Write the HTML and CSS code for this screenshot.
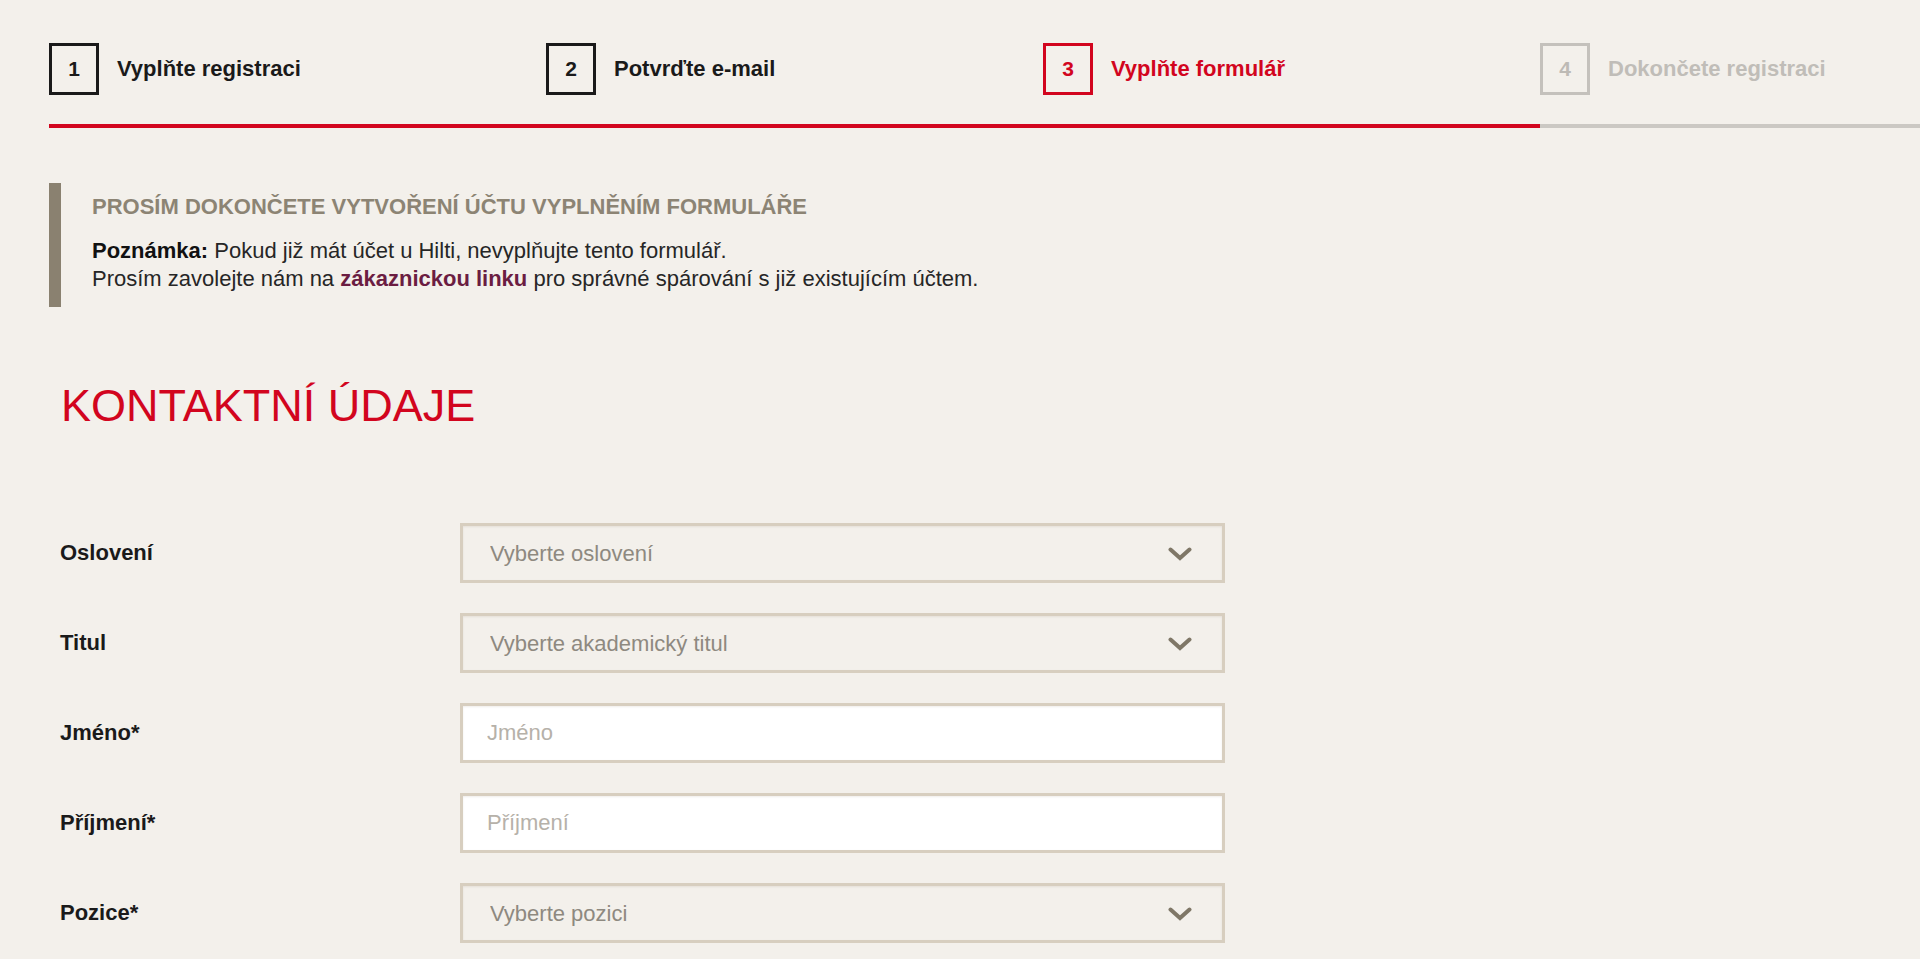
FILE: index.html
```html
<!DOCTYPE html>
<html lang="cs">
<head>
<meta charset="utf-8">
<title>Registrace – Kontaktní údaje</title>
<link rel="stylesheet" href="styles.css">
</head>
<body>
<div class="page">
  <nav class="stepper">
    <div class="step step-done">
      <div class="step-head"><span class="step-num">1</span><span class="step-label">Vyplňte registraci</span></div>
      <div class="step-line"></div>
    </div>
    <div class="step step-done">
      <div class="step-head"><span class="step-num">2</span><span class="step-label">Potvrďte e-mail</span></div>
      <div class="step-line"></div>
    </div>
    <div class="step step-current">
      <div class="step-head"><span class="step-num">3</span><span class="step-label">Vyplňte formulář</span></div>
      <div class="step-line"></div>
    </div>
    <div class="step step-todo step-last">
      <div class="step-head"><span class="step-num">4</span><span class="step-label">Dokončete registraci</span></div>
      <div class="step-line"></div>
    </div>
  </nav>

  <section class="notice">
    <h2 class="notice-title">PROSÍM DOKONČETE VYTVOŘENÍ ÚČTU VYPLNĚNÍM FORMULÁŘE</h2>
    <p class="notice-text"><strong>Poznámka:</strong> Pokud již mát účet u Hilti, nevyplňujte tento formulář.<br>Prosím zavolejte nám na <a class="notice-link" href="#">zákaznickou linku</a> pro správné spárování s již existujícím účtem.</p>
  </section>

  <h1 class="section-title">KONTAKTNÍ ÚDAJE</h1>

  <form class="form">
    <label class="form-label" for="salutation">Oslovení</label>
    <div class="select-wrap">
      <select id="salutation" class="field field-select"><option>Vyberte oslovení</option></select>
      <svg class="chevron" viewBox="0 0 24 14" aria-hidden="true"><polyline points="2.5,2.5 12,11 21.5,2.5"/></svg>
    </div>

    <label class="form-label" for="title">Titul</label>
    <div class="select-wrap">
      <select id="title" class="field field-select"><option>Vyberte akademický titul</option></select>
      <svg class="chevron" viewBox="0 0 24 14" aria-hidden="true"><polyline points="2.5,2.5 12,11 21.5,2.5"/></svg>
    </div>

    <label class="form-label" for="firstname">Jméno*</label>
    <input id="firstname" class="field field-input" type="text" placeholder="Jméno">

    <label class="form-label" for="lastname">Příjmení*</label>
    <input id="lastname" class="field field-input" type="text" placeholder="Příjmení">

    <label class="form-label" for="position">Pozice*</label>
    <div class="select-wrap">
      <select id="position" class="field field-select"><option>Vyberte pozici</option></select>
      <svg class="chevron" viewBox="0 0 24 14" aria-hidden="true"><polyline points="2.5,2.5 12,11 21.5,2.5"/></svg>
    </div>
  </form>
</div>
</body>
</html>
```

FILE: styles.css
```css
html, body {
  margin: 0;
  padding: 0;
  overflow: hidden;
  background: #f3f0eb;
}

body {
  font-family: "Liberation Sans", Arial, sans-serif;
  font-size: 22px;
  color: #1f1f1f;
}

.page {
  height: 959px;
}

/* Stepper */
.stepper {
  display: flex;
  padding: 43px 0 0 49px;
}

.step {
  width: 497px;
  flex: none;
}

.step-last {
  flex: 1 1 auto;
  width: auto;
  min-width: 0;
}

.step-head {
  display: flex;
  align-items: center;
  height: 52px;
}

.step-num {
  box-sizing: border-box;
  width: 50px;
  height: 52px;
  border: 3px solid #1a1a1a;
  display: flex;
  align-items: center;
  justify-content: center;
  font-weight: 700;
  font-size: 21px;
  color: #1a1a1a;
}

.step-label {
  margin-left: 18px;
  font-weight: 700;
  font-size: 22px;
  color: #1a1a1a;
  white-space: nowrap;
}

.step-line {
  margin-top: 29px;
  height: 4px;
  background: #d2051e;
}

.step-current .step-num {
  border-color: #d2051e;
  color: #d2051e;
}

.step-current .step-label {
  color: #d2051e;
}

.step-todo .step-num {
  border-color: #c4c1bc;
  color: #bdbab5;
}

.step-todo .step-label {
  color: #c0bdb8;
}

.step-todo .step-line {
  background: #cbc8c3;
}

/* Notice */
.notice {
  margin: 55px 0 0 49px;
  border-left: 12px solid #8a8170;
  padding: 10px 0 14px 31px;
}

.notice-title {
  margin: 0;
  font-size: 22px;
  line-height: 28px;
  font-weight: 700;
  color: #8c8474;
}

.notice-text {
  margin: 16px 0 0;
  font-size: 22px;
  line-height: 28px;
  color: #262626;
}

.notice-text strong {
  color: #111;
}

.notice-link {
  color: #6b1d42;
  font-weight: 700;
  text-decoration: none;
}

/* Section title */
.section-title {
  margin: 72px 0 0;
  padding-left: 61px;
  font-size: 45px;
  line-height: 54px;
  font-weight: 400;
  color: #d2051e;
}

/* Form */
.form {
  margin-top: 90px;
  padding-left: 60px;
  display: grid;
  grid-template-columns: 400px 765px;
  grid-auto-rows: 60px;
  row-gap: 30px;
  align-items: center;
}

.form-label {
  font-weight: 700;
  font-size: 22px;
  color: #1a1a1a;
}

.select-wrap {
  position: relative;
  height: 60px;
}

.field {
  box-sizing: border-box;
  width: 765px;
  height: 60px;
  margin: 0;
  border: 3px solid #d7cebf;
  border-radius: 0;
  box-shadow: inset 0 1px 2px rgba(120, 105, 80, 0.12);
  padding: 0 60px 0 27px;
  font-family: "Liberation Sans", Arial, sans-serif;
  font-size: 22px;
  outline: none;
}

.field-select {
  appearance: none;
  -webkit-appearance: none;
  background: transparent;
  color: #8e8980;
}

.field-input {
  background: #ffffff;
  color: #333;
  padding-left: 24px;
}

.field-input::placeholder {
  color: #b6b1a9;
  opacity: 1;
}

.chevron {
  position: absolute;
  top: 24px;
  right: 33px;
  width: 24px;
  height: 14px;
  pointer-events: none;
}

.chevron polyline {
  fill: none;
  stroke: #7f7767;
  stroke-width: 4;
  stroke-linecap: round;
  stroke-linejoin: miter;
}
```
